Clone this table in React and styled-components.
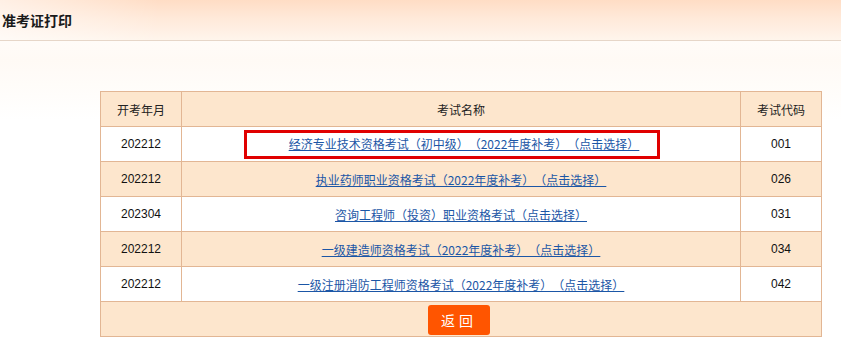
import React from 'react';
import styled, { createGlobalStyle } from 'styled-components';

const GlobalStyle = createGlobalStyle`
body {
    margin: 0;
    background: #ffffff;
    font-family: 'Liberation Sans', 'Noto Sans CJK SC', sans-serif;
    font-size: 12px;
    color: #222;
    text-spacing-trim: space-all;
}
`;

const Page = styled.div`
width: 841px;
height: 345px;
overflow: hidden;
background: linear-gradient(180deg, #ffffff 0px, #fffaf5 60px, #ffffff 120px);
`;

const Header = styled.div`
height: 40px;
display: flex;
align-items: center;
padding-left: 2px;
border-bottom: 1px solid #e6d6c8;
background:
    linear-gradient(90deg, rgba(255, 255, 255, 0.55) 0px, rgba(255, 255, 255, 0) 160px),
    linear-gradient(180deg, #ffddc5 0%, #ffe9d9 45%, #fff5ec 100%);
`;

const Title = styled.h1`
margin: 0;
font-family: 'Noto Sans CJK SC', sans-serif;
font-size: 14px;
font-weight: bold;
color: #1a1a1a;
`;

const Content = styled.div`
padding: 50px 0 0 100px;
`;

const Table = styled.table`
width: 722px;
border-collapse: collapse;
table-layout: fixed;
`;

const Th = styled.th`
height: 34px;
padding: 0;
font-family: 'Noto Sans CJK SC', sans-serif;
font-weight: normal;
font-size: 12px;
color: #222;
background: #fde6cd;
border: 1px solid #e2b694;
text-align: center;
`;

const Td = styled.td`
height: 34px;
padding: 0;
text-align: center;
font-size: 12px;
color: #111;
background: ${props => (props.$shade ? '#fde6cd' : '#ffffff')};
border: 1px solid #e2b694;
`;

const ExamLink = styled.a`
font-family: 'Noto Sans CJK SC', sans-serif;
font-size: 12px;
color: #1b56a6;
text-decoration: underline;
cursor: pointer;
`;

// red frame around the currently chosen exam
const Marked = styled.span`
display: inline-block;
border: 3px solid #e00000;
padding: 1px 18px 1px 42px;
margin-left: -18px;
line-height: 20px;
`;

const BackButton = styled.button`
width: 62px;
height: 30px;
margin: 2px 0 0 -4px;
border: none;
border-radius: 3px;
background: #ff5500;
color: #ffffff;
font-family: 'Noto Sans CJK SC', sans-serif;
font-size: 14px;
letter-spacing: 4px;
padding-left: 6px;
cursor: pointer;
`;

const exams = [
    { month: '202212', name: '经济专业技术资格考试（初中级）（2022年度补考）（点击选择）', code: '001', marked: true },
    { month: '202212', name: '执业药师职业资格考试（2022年度补考）（点击选择）', code: '026' },
    { month: '202304', name: '咨询工程师（投资）职业资格考试（点击选择）', code: '031' },
    { month: '202212', name: '一级建造师资格考试（2022年度补考）（点击选择）', code: '034' },
    { month: '202212', name: '一级注册消防工程师资格考试（2022年度补考）（点击选择）', code: '042' },
];

export default function App() {
    return (
        <Page>
            <GlobalStyle />
            <Header>
                <Title>准考证打印</Title>
            </Header>
            <Content>
                <Table>
                    <colgroup>
                        <col style={{ width: '81px' }} />
                        <col />
                        <col style={{ width: '81px' }} />
                    </colgroup>
                    <thead>
                        <tr>
                            <Th>开考年月</Th>
                            <Th>考试名称</Th>
                            <Th>考试代码</Th>
                        </tr>
                    </thead>
                    <tbody>
                        {exams.map((exam, i) => (
                            <tr key={exam.code}>
                                <Td $shade={i % 2 === 1}>{exam.month}</Td>
                                <Td $shade={i % 2 === 1}>
                                    {exam.marked ? (
                                        <Marked>
                                            <ExamLink>{exam.name}</ExamLink>
                                        </Marked>
                                    ) : (
                                        <ExamLink>{exam.name}</ExamLink>
                                    )}
                                </Td>
                                <Td $shade={i % 2 === 1}>{exam.code}</Td>
                            </tr>
                        ))}
                        <tr>
                            <Td $shade colSpan={3}>
                                <BackButton>返回</BackButton>
                            </Td>
                        </tr>
                    </tbody>
                </Table>
            </Content>
        </Page>
    );
}
